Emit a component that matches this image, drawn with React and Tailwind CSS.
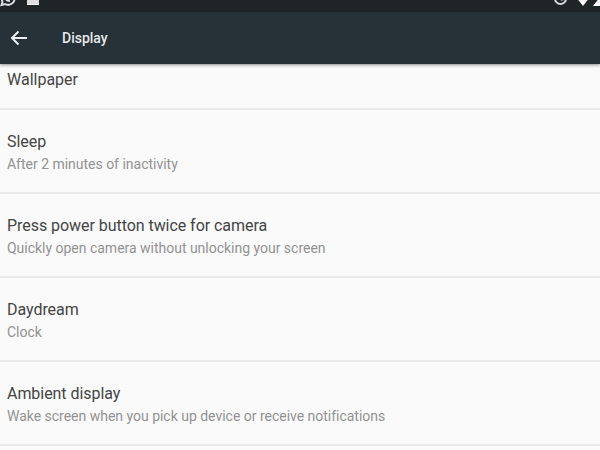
const rows = [
  { title: "Sleep", sub: "After 2 minutes of inactivity" },
  { title: "Press power button twice for camera", sub: "Quickly open camera without unlocking your screen" },
  { title: "Daydream", sub: "Clock" },
  { title: "Ambient display", sub: "Wake screen when you pick up device or receive notifications" },
];

const StatusBar = () => (
  <div className="h-[12px] bg-[#1f2527] flex justify-between overflow-hidden shrink-0">
    <div className="flex items-start gap-[11px] -mt-[10px] -ml-[1px]">
      <svg width="17" height="17" viewBox="0 0 17 17" fill="none" stroke="#dcdcdc" strokeWidth="2">
        <path d="M2.5 15l1-3.5a6.5 6.5 0 1 1 2.5 2.5z" />
        <path d="M6 6c0 3 2 5 5 5" strokeWidth="2" />
      </svg>
      <div className="w-[12px] h-[15px] bg-[#dedede] border-b-[1px] border-[#f5f5f5]" />
    </div>
    <div className="flex items-start -mt-[9px]">
      <svg width="15" height="15" viewBox="0 0 15 15" fill="none" stroke="#d8d8d8" strokeWidth="2">
        <circle cx="7.5" cy="7.5" r="5.5" />
        <path d="M7.5 5v3l2 1.5" strokeWidth="1.5" />
      </svg>
      <svg width="14" height="15" viewBox="0 0 14 15" fill="#fff" className="ml-[8px]">
        <path d="M0 6h14l-7 9z" />
      </svg>
      <svg width="7" height="15" viewBox="0 0 7 15" fill="#fff" className="ml-[3px]">
        <path d="M7 6v9H0z" />
      </svg>
    </div>
  </div>
);

const App = () => {
  return (
    <div className="w-[600px] h-[450px] overflow-hidden flex flex-col bg-[#fafafa] font-['Roboto',sans-serif]">
      <StatusBar />
      <div className="h-[52px] bg-[#263238] flex items-center shrink-0 shadow-[0_1px_3px_rgba(0,0,0,0.45)] relative">
        <svg width="20" height="20" viewBox="0 0 20 20" fill="none" stroke="#eceff1" strokeWidth="2" className="ml-[9px]">
          <path d="M18 10H3M9.5 3.5 3 10l6.5 6.5" />
        </svg>
        <span className="ml-[33px] mt-[1px] text-[14px] font-medium text-[#e4e8ea]">Display</span>
      </div>
      <div className="h-[46px] px-[7px] pt-[6px] border-b-2 border-[#ebebeb] text-[16px] leading-[20px] text-[#444444] shrink-0">
        Wallpaper
      </div>
      {rows.map((row) => (
        <div key={row.title} className="h-[84px] px-[7px] pt-[22px] border-b-2 border-[#ebebeb] shrink-0">
          <div className="text-[16px] leading-[20px] tracking-[-0.05px] text-[#444444]">{row.title}</div>
          <div className="text-[14px] leading-[20px] tracking-[-0.015px] mt-[2px] text-[#929292]">{row.sub}</div>
        </div>
      ))}
    </div>
  );
};

export default App;
